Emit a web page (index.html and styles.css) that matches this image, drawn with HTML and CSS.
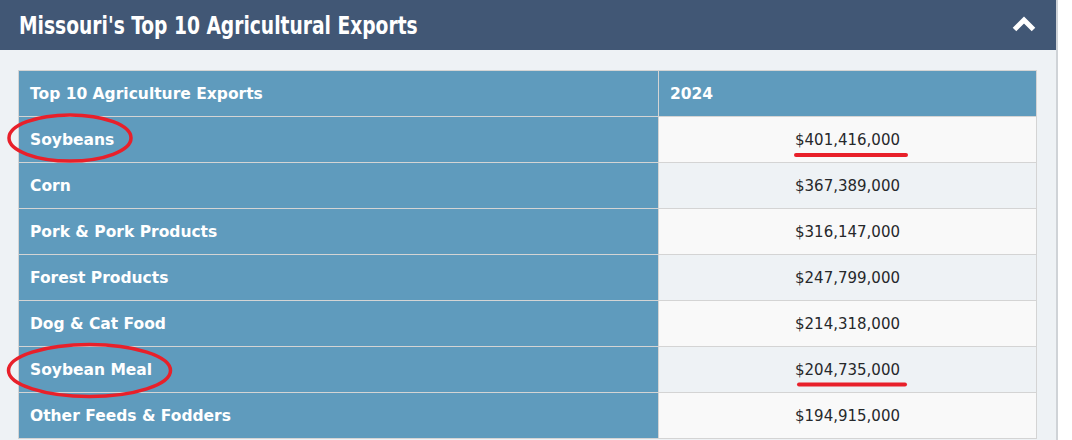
FILE: index.html
```html
<!DOCTYPE html>
<html>
<head>
<meta charset="utf-8">
<link rel="stylesheet" href="styles.css">
</head>
<body>
<div class="panel">
  <div class="panel-head">
    <h2 class="panel-title">Missouri's Top 10 Agricultural Exports</h2>
    <svg class="chevron" width="24" height="16" viewBox="0 0 24 16"><path d="M2.5 13.5 L12 4 L21.5 13.5" fill="none" stroke="#fff" stroke-width="5" stroke-linecap="butt" stroke-linejoin="miter"/></svg>
  </div>
  <div class="panel-body">
    <table class="exports">
      <thead>
        <tr><th>Top 10 Agriculture Exports</th><th>2024</th></tr>
      </thead>
      <tbody>
        <tr><th>Soybeans</th><td><span class="val">$401,416,000</span></td></tr>
        <tr><th>Corn</th><td><span class="val">$367,389,000</span></td></tr>
        <tr><th>Pork &amp; Pork Products</th><td><span class="val">$316,147,000</span></td></tr>
        <tr><th>Forest Products</th><td><span class="val">$247,799,000</span></td></tr>
        <tr><th>Dog &amp; Cat Food</th><td><span class="val">$214,318,000</span></td></tr>
        <tr><th>Soybean Meal</th><td><span class="val">$204,735,000</span></td></tr>
        <tr><th>Other Feeds &amp; Fodders</th><td><span class="val">$194,915,000</span></td></tr>
      </tbody>
    </table>
  </div>
  <svg class="marks" width="1072" height="440" viewBox="0 0 1072 440">
    <ellipse cx="70" cy="138" rx="61" ry="23" fill="none" stroke="#e8202a" stroke-width="3.5"/>
    <ellipse cx="89.5" cy="370.5" rx="81" ry="26" fill="none" stroke="#e8202a" stroke-width="3.5"/>
    <line x1="796" y1="155" x2="906" y2="155" stroke="#e8202a" stroke-width="4" stroke-linecap="round"/>
    <line x1="799" y1="384.5" x2="905" y2="384.5" stroke="#e8202a" stroke-width="4" stroke-linecap="round"/>
  </svg>
</div>
</body>
</html>
```
FILE: styles.css
```css
html, body {
  margin: 0;
  padding: 0;
  background: #ffffff;
  height: 440px;
  overflow: hidden;
}
.panel {
  position: relative;
  width: 1056px;
  border-right: 2px solid #cfd3d7;
  background: #eef2f5;
  min-height: 440px;
}
.panel-head {
  height: 50px;
  background: #415775;
  display: flex;
  align-items: center;
  justify-content: space-between;
  padding: 0 20px 0 19px;
}
.panel-title {
  margin: 0;
  color: #ffffff;
  font-family: "DejaVu Sans Condensed", "DejaVu Sans", sans-serif;
  font-weight: bold;
  font-size: 25px;
  line-height: 1;
  white-space: nowrap;
  transform: scaleX(0.83);
  transform-origin: left center;
}
.chevron {
  display: block;
  margin-top: -2px;
}
.panel-body {
  padding: 20px 19px 0 18px;
}
.exports {
  width: 100%;
  border-collapse: collapse;
  border: 1px solid #d4d4d4;
  font-family: "DejaVu Sans", Verdana, sans-serif;
  font-size: 15px;
}
.exports th, .exports td {
  height: 46px;
  padding: 0 11px;
  border: 1px solid #d4d4d4;
  box-sizing: border-box;
}
.exports th {
  background: #5f9bbd;
  color: #ffffff;
  text-align: left;
  font-weight: bold;
  font-size: 15.5px;
  width: 640px;
}
.exports thead th + th {
  width: auto;
}
.exports td {
  text-align: center;
  color: #26282b;
  background: #f9f9f9;
}
.exports tbody tr:nth-child(even) td {
  background: #eef2f5;
}
.marks {
  position: absolute;
  left: 0;
  top: 0;
  pointer-events: none;
}
```
